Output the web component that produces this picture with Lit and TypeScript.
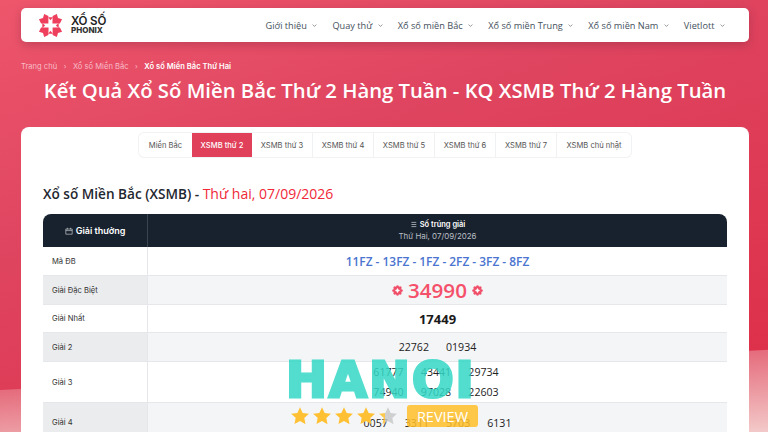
import { LitElement, html, css, svg } from "lit";
import { customElement } from "lit/decorators.js";

const chevron = html`<svg class="chev" viewBox="0 0 8 8" width="5" height="5"><path d="M1 2.5 4 5.5 7 2.5" fill="none" stroke="currentColor" stroke-width="1.2"/></svg>`;
const flower = html`<svg class="flower" viewBox="0 0 12 12" width="11" height="11"><g fill="#f0506a">${[0, 45, 90, 135, 180, 225, 270, 315].map((a) => svg`<ellipse cx="6" cy="2.4" rx="1.7" ry="2.2" transform="rotate(${a} 6 6)"/>`)}</g><path d="M6 3.6v4.8M3.6 6h4.8" stroke="#fff" stroke-width="1"/></svg>`;
const STAR = "M12 1.5l3.2 6.9 7.5.9-5.5 5.2 1.4 7.5L12 18l-6.6 3.5 1.4-7.5L1.3 9.3l7.5-.9z";
const star = html`<svg viewBox="0 0 24 24" width="20" height="20"><path fill="#ffc133" d="${STAR}"/></svg>`;
const halfStar = html`<svg viewBox="0 0 24 24" width="20" height="20"><defs><linearGradient id="half"><stop offset=".35" stop-color="#ffc133"/><stop offset=".35" stop-color="#c9c9c9"/></linearGradient></defs><path fill="url(#half)" opacity=".85" d="${STAR}"/></svg>`;

@customElement("app-root")
export class AppRoot extends LitElement {
  static styles = css`
    :host { display: block; width: 768px; height: 432px; overflow: hidden; position: relative; font-family: "Inter", "Liberation Sans", sans-serif; color: #222; }
    .page { height: 432px; padding: 8px 19px 0 21px; box-sizing: border-box; background:
      linear-gradient(177deg, rgba(255,255,255,0) 0, rgba(255,255,255,0) 389px, #e56c7c 390px, #f3c8c8 470px),
      linear-gradient(160deg, #ee566c 0%, #df4560 35%, #dd2c46 100%); }
    .nav { height: 34px; background: #fff; border-radius: 5px; display: flex; align-items: center; padding: 0 24px 0 17px; box-shadow: 0 3px 10px rgba(90,30,50,.28); }
    .logo { display: flex; align-items: center; gap: 8px; }
    .logo-text { display: flex; flex-direction: column; font-weight: 600; color: #222; line-height: 10px; align-items: flex-start; }
    .logo-top { font-size: 11.6px; letter-spacing: -.2px; }
    .logo-bot { font-size: 8px; font-weight: 800; color: #333; line-height: 8px; }
    .links { margin-left: auto; display: flex; gap: 15px; font-family: "Open Sans", sans-serif; font-size: 9.2px; color: #44505c; align-items: center; }
    .links span { display: flex; align-items: center; gap: 5.5px; white-space: nowrap; }
    .chev { color: #777; }
    .crumbs { margin-top: 18px; height: 12px; display: flex; align-items: center; gap: 6.5px; font-size: 7.6px; color: #f8bcc6; }
    .crumbs b { color: #fff; font-weight: 600; }
    .crumbs i { font-style: normal; font-size: 7px; }
    h1 { margin: 3px 0 0; text-align: center; font-family: "Open Sans", sans-serif; font-size: 20.3px; line-height: 30px; font-weight: 600; color: #fff; white-space: nowrap; }
    .card { margin-top: 22px; height: 320px; background: #fff; border-radius: 8px 8px 0 0; padding: 6px 22px 0; }
    .tabs { display: flex; width: 492px; margin: 0 auto; height: 24px; border-radius: 5px; box-shadow: 0 0 0 1px #f1f2f4; font-size: 7.6px; color: #555; overflow: hidden; }
    .tabs span { display: flex; align-items: center; justify-content: center; flex: 0 0 61px; border-right: 1px solid #f0f1f3; box-sizing: border-box; white-space: nowrap; }
    .tabs .first { flex-basis: 53px; border: 0; }
    .tabs .on { background: #e0405a; color: #fff; font-weight: 500; flex-basis: 60px; border: 0; }
    .tabs .last { flex: 1; border: 0; }
    h2 { margin: 27px 0 0; height: 20px; font-family: "Open Sans", sans-serif; font-size: 13.6px; line-height: 20px; font-weight: 600; color: #1f2730; white-space: nowrap; }
    h2 em { font-style: normal; color: #f02838; font-weight: 500; font-size: 14px; }
    .table { margin-top: 10px; display: grid; grid-template-columns: 105px 1fr; grid-template-rows: 33px 29px 29px 28px 29px 41px 40px; font-size: 7.6px; }
    .table > div { display: flex; align-items: center; border-bottom: 1px solid #e6e7ea; box-sizing: border-box; }
    .table .hd { background: #18222e; color: #fff; border: 0; }
    .table .hd1 { border-radius: 8px 0 0 0; justify-content: center; gap: 3px; font-weight: 600; font-size: 9px; border-right: 1px solid #3a444f; }
    .hd2 { border-radius: 0 8px 0 0; flex-direction: column; justify-content: center; gap: 2px; font-size: 7.5px; }
    .hd2 b { font-weight: 600; display: flex; align-items: center; gap: 3px; }
    .hd2 small { font-size: 7.9px; color: #b9bec4; }
    .l { padding-left: 9px; border-right: 1px solid #e6e7ea; color: #333; }
    .v { justify-content: center; font-family: "Open Sans", sans-serif; font-size: 10.6px; color: #222; }
    .l.alt { background: #ebecee; }
    .v.alt { background: #f4f5f7; }
    .v.ma { color: #4a74d0; font-weight: 600; font-size: 11.9px; }
    .v.db { color: #f5506a; font-weight: 600; font-size: 20.6px; gap: 5px; }
    .v.nhat { font-weight: 700; font-size: 13px; color: #1a1a1a; }
    .row2 { gap: 17px; }
    .nums { display: grid; grid-template-columns: repeat(3, 47.5px); row-gap: 6px; justify-items: center; margin-right: 3px; }
    .four { gap: 17px; }
    .wm { position: absolute; left: 286px; top: 358px; width: 192px; display: flex; flex-direction: column; pointer-events: none; }
    .wm-title { font-family: "DejaVu Sans", sans-serif; font-weight: 700; font-size: 49px; line-height: 46px; height: 46px; letter-spacing: 2px; color: #34d8c6; -webkit-text-stroke: 3px #34d8c6; opacity: .85; white-space: nowrap; }
    .wm-row { display: flex; align-items: center; margin-top: 1px; padding-left: 4px; }
    .stars { display: flex; gap: 2px; }
    .badge { margin-left: auto; width: 71px; height: 22px; background: rgba(255,190,40,.85); border-radius: 3px; color: #fff; font-family: "Open Sans", sans-serif; font-size: 14.5px; display: flex; align-items: center; justify-content: center; }
  `;

  render() {
    return html`
      <div class="page">
        <div class="nav">
          <div class="logo">
            <svg viewBox="0 0 26 26" width="25" height="25">
              <g fill="#ee3f5d">
                ${[0, 90, 180, 270].map((a) => svg`<path transform="rotate(${a} 13 13)" d="M15 10.8 15.2 3.2 19.6 1 20.8 5.2 25 6.4 22.8 10.8z"/>`)}
                ${[0, 90, 180, 270].map((a) => svg`<path transform="rotate(${a} 13 13)" d="M10.5 4.5H15.5L13 7.5z"/>`)}
              </g>
            </svg>
            <div class="logo-text"><span class="logo-top">XỔ SỐ</span><span class="logo-bot">PHONIX</span></div>
          </div>
          <div class="links">
            ${["Giới thiệu", "Quay thử", "Xổ số miền Bắc", "Xổ số miền Trung", "Xổ số miền Nam", "Vietlott"].map((t) => html`<span>${t}${chevron}</span>`)}
          </div>
        </div>
        <div class="crumbs"><span>Trang chủ</span><i>›</i><span>Xổ số Miền Bắc</span><i>›</i><b>Xổ số Miền Bắc Thứ Hai</b></div>
        <h1>Kết Quả Xổ Số Miền Bắc Thứ 2 Hàng Tuần - KQ XSMB Thứ 2 Hàng Tuần</h1>
        <div class="card">
          <div class="tabs">
            <span class="first">Miền Bắc</span><span class="on">XSMB thứ 2</span><span>XSMB thứ 3</span><span>XSMB thứ 4</span><span>XSMB thứ 5</span><span>XSMB thứ 6</span><span>XSMB thứ 7</span><span class="last">XSMB chủ nhật</span>
          </div>
          <h2>Xổ số Miền Bắc (XSMB) - <em>Thứ hai, 07/09/2026</em></h2>
          <div class="table">
            <div class="hd hd1"><svg viewBox="0 0 10 10" width="8" height="8"><path d="M1 2.5h8v6.5H1zM1 4.5h8M3 1v2M7 1v2" fill="none" stroke="#cfd3d7" stroke-width=".8"/></svg>Giải thưởng</div>
            <div class="hd hd2"><b><svg viewBox="0 0 10 10" width="7" height="7"><path d="M2 2h7M2 5h7M2 8h7" stroke="#cfd3d7" fill="none"/></svg>Số trúng giải</b><small>Thứ Hai, 07/09/2026</small></div>
            <div class="l">Mã ĐB</div><div class="v ma">11FZ - 13FZ - 1FZ - 2FZ - 3FZ - 8FZ</div>
            <div class="l alt">Giải Đặc Biệt</div><div class="v alt db">${flower}<span>34990</span>${flower}</div>
            <div class="l">Giải Nhất</div><div class="v nhat">17449</div>
            <div class="l alt">Giải 2</div><div class="v alt row2"><span>22762</span><span>01934</span></div>
            <div class="l">Giải 3</div><div class="v"><div class="nums"><span>61777</span><span>43441</span><span>29734</span><span>74940</span><span>97028</span><span>22603</span></div></div>
            <div class="l alt">Giải 4</div><div class="v alt four"><span>0057</span><span>3311</span><span>5703</span><span>6131</span></div>
          </div>
        </div>
      </div>
      <div class="wm">
        <div class="wm-title">HANOI</div>
        <div class="wm-row">
          <div class="stars">${star}${star}${star}${star}${halfStar}</div>
          <div class="badge">REVIEW</div>
        </div>
      </div>
    `;
  }
}
